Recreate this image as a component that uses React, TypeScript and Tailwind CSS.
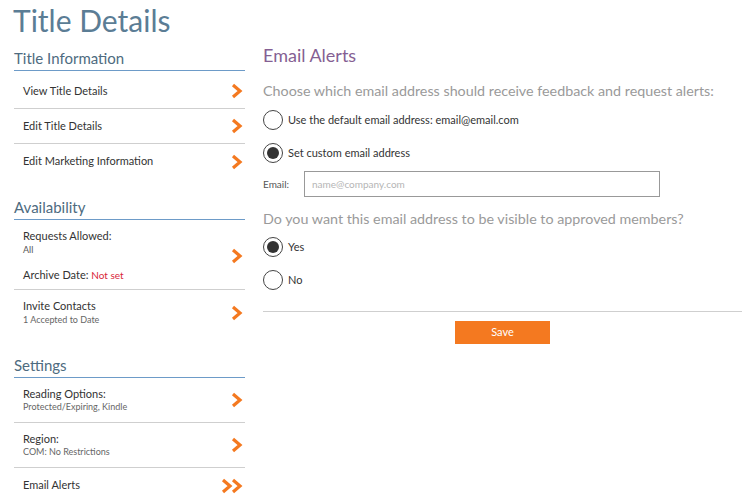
import React from 'react'

const font = { fontFamily: 'Lato, "Open Sans", sans-serif' }

function Chevron({ double = false }: { double?: boolean }) {
  return (
    <span className="flex items-center text-[#f47920]">
      {double && (
        <svg width="12" height="16" viewBox="0 0 12 16" className="-mr-[2px]">
          <path d="M2 2 L9 8 L2 14" fill="none" stroke="currentColor" strokeWidth="3.2" />
        </svg>
      )}
      <svg width="12" height="16" viewBox="0 0 12 16">
        <path d="M2 2 L9 8 L2 14" fill="none" stroke="currentColor" strokeWidth="3.2" />
      </svg>
    </span>
  )
}

function NavRow({ children, last = false, double = false, h = 'h-[35px]' }: { children: React.ReactNode; last?: boolean; double?: boolean; h?: string }) {
  return (
    <div className={`flex items-center justify-between pl-[9px] pr-[2px] ${h} ${last ? '' : 'border-b border-[#cfcfcf]'}`}>
      <div className="text-[11px] text-[#333]">{children}</div>
      <Chevron double={double} />
    </div>
  )
}

function SectionHead({ title }: { title: string }) {
  return (
    <div className="border-b border-[#6d9bc8] pb-[2px] text-[15px] leading-[20px] text-[#4e6b80]">{title}</div>
  )
}

function Radio({ checked, label }: { checked: boolean; label: string }) {
  return (
    <div className="flex items-center gap-[5px]">
      <span className="flex h-[20px] w-[20px] items-center justify-center rounded-full border border-[#444] bg-white">
        {checked && <span className="h-[12px] w-[12px] rounded-full bg-[#333]" />}
      </span>
      <span className="text-[11px] text-[#333]">{label}</span>
    </div>
  )
}

export default function App() {
  return (
    <div style={font} className="h-[500px] w-[755px] overflow-hidden bg-white">
      <h1 className="pl-[13px] pt-[2px] text-[30px] leading-[36px] text-[#5b7d95]">Title Details</h1>
      <div className="flex pl-[14px]">
        {/* left nav */}
        <div className="w-[231px] shrink-0">
          <div className="mt-[10px]">
            <SectionHead title="Title Information" />
            <NavRow h="h-[38px] pt-[3px]">View Title Details</NavRow>
            <NavRow>Edit Title Details</NavRow>
            <NavRow last>Edit Marketing Information</NavRow>
          </div>
          <div className="mt-[18px]">
            <SectionHead title="Availability" />
            <div className="flex items-center justify-between border-b border-[#cfcfcf] pl-[9px] pr-[2px] pt-[9px] pb-[7px]">
              <div className="text-[11px] text-[#333]">
                <div className="leading-[14px]">Requests Allowed:</div>
                <div className="text-[9px] leading-[14px] text-[#555]">All</div>
                <div className="mt-[11px] leading-[14px]">
                  Archive Date: <span className="text-[10px] text-[#d9263a]">Not set</span>
                </div>
              </div>
              <Chevron />
            </div>
            <div className="flex items-center justify-between pl-[9px] pr-[2px] pt-[9px] pb-[8px]">
              <div className="text-[11px] text-[#333]">
                <div className="leading-[14px]">Invite Contacts</div>
                <div className="text-[9px] leading-[14px] text-[#666]">1 Accepted to Date</div>
              </div>
              <Chevron />
            </div>
          </div>
          <div className="mt-[20px]">
            <SectionHead title="Settings" />
            <div className="flex items-center justify-between border-b border-[#cfcfcf] pl-[9px] pr-[2px] pt-[9px] pb-[9px]">
              <div className="text-[11px] text-[#333]">
                <div className="leading-[14px]">Reading Options:</div>
                <div className="text-[9px] leading-[12px] text-[#666]">Protected/Expiring, Kindle</div>
              </div>
              <Chevron />
            </div>
            <div className="flex items-center justify-between border-b border-[#cfcfcf] pl-[9px] pr-[2px] pt-[9px] pb-[9px]">
              <div className="text-[11px] text-[#333]">
                <div className="leading-[14px]">Region:</div>
                <div className="text-[9px] leading-[12px] text-[#666]">COM: No Restrictions</div>
              </div>
              <Chevron />
            </div>
            <NavRow last double>Email Alerts</NavRow>
          </div>
        </div>

        {/* right content */}
        <div className="ml-[18px] w-[479px]">
          <h2 className="mt-[5px] text-[18px] leading-[24px] text-[#855f93]">Email Alerts</h2>
          <p className="mt-[14px] text-[14.3px] leading-[20px] text-[#9a9a9a]">
            Choose which email address should receive feedback and request alerts:
          </p>
          <div className="mt-[9px] flex flex-col gap-[13px]">
            <Radio checked={false} label="Use the default email address: email@email.com" />
            <Radio checked label="Set custom email address" />
          </div>
          <div className="mt-[8px] flex items-center">
            <span className="w-[41px] text-[10px] text-[#555]">Email:</span>
            <div className="flex h-[26px] w-[356px] items-center border border-[#999] px-[7px] text-[10px] text-[#b5b5b5]">
              name@company.com
            </div>
          </div>
          <p className="mt-[12px] text-[14.3px] leading-[20px] text-[#9a9a9a]">
            Do you want this email address to be visible to approved members?
          </p>
          <div className="mt-[8px] flex flex-col gap-[13px]">
            <Radio checked label="Yes" />
            <Radio checked={false} label="No" />
          </div>
          <div className="mt-[21px] border-t border-[#cfcfcf]" />
          <div className="mt-[9px] flex justify-center">
            <button className="h-[23px] w-[95px] bg-[#f47920] text-[11px] text-white">Save</button>
          </div>
        </div>
      </div>
    </div>
  )
}
